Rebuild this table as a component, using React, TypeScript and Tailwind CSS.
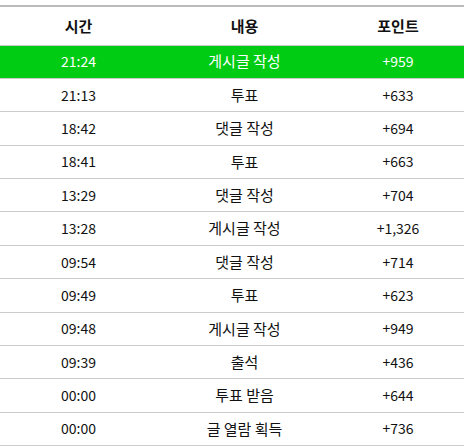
const rows = [
  { time: "21:24", content: "게시글 작성", point: "+959", active: true },
  { time: "21:13", content: "투표", point: "+633" },
  { time: "18:42", content: "댓글 작성", point: "+694" },
  { time: "18:41", content: "투표", point: "+663" },
  { time: "13:29", content: "댓글 작성", point: "+704" },
  { time: "13:28", content: "게시글 작성", point: "+1,326" },
  { time: "09:54", content: "댓글 작성", point: "+714" },
  { time: "09:49", content: "투표", point: "+623" },
  { time: "09:48", content: "게시글 작성", point: "+949" },
  { time: "09:39", content: "출석", point: "+436" },
  { time: "00:00", content: "투표 받음", point: "+644" },
  { time: "00:00", content: "글 열람 획득", point: "+736" },
];

const App = () => {
  return (
    <div className="w-[464px] bg-white pt-[5px] font-['Noto_Sans_CJK_KR',sans-serif] text-[14px] text-[#111]">
      <table className="w-full table-fixed border-collapse border-t-2 border-[#bbbbbb]">
        <colgroup>
          <col className="w-[157px]" />
          <col className="w-[175px]" />
          <col />
        </colgroup>
        <thead>
          <tr className="h-[39px] border-b border-[#cccccc] text-[15px]">
            <th className="text-center font-bold">시간</th>
            <th className="text-center font-bold">내용</th>
            <th className="text-center font-bold">포인트</th>
          </tr>
        </thead>
        <tbody>
          {rows.map((row, i) => (
            <tr
              key={i}
              className={
                row.active
                  ? "h-[33.4px] border-b border-[#cccccc] bg-[#00cc14] text-white"
                  : "h-[33.4px] border-b border-[#cccccc]"
              }
            >
              <td className="text-center">{row.time}</td>
              <td className="text-center text-[15px]">{row.content}</td>
              <td className="text-center">{row.point}</td>
            </tr>
          ))}
        </tbody>
      </table>
    </div>
  );
};

export default App;
